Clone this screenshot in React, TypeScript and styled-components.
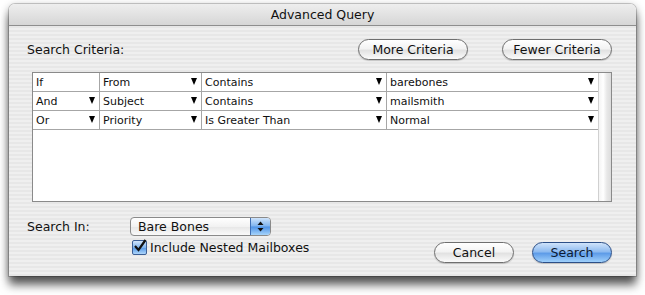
import React from "react";
import styled, { createGlobalStyle } from "styled-components";

const Global = createGlobalStyle`
  html, body { margin: 0; padding: 0; background: #ffffff; }
  body { font-family: "DejaVu Sans", "Liberation Sans", sans-serif; }
`;

const Page = styled.div`
  width: 645px;
  height: 295px;
  padding: 4px 0 0 9px;
  box-sizing: border-box;
`;

const Window = styled.div`
  width: 627px;
  height: 272px;
  border-radius: 6px 6px 0 0;
  background: repeating-linear-gradient(to bottom, #efefef 0, #efefef 2px, #e7e7e7 2px, #e7e7e7 4px);
  box-shadow: 0 9px 10px rgba(0, 0, 0, 0.6), 0 0 0 1px rgba(0, 0, 0, 0.18), 0 2px 8px rgba(0,0,0,0.3);
  display: flex;
  flex-direction: column;
  overflow: hidden;
`;

const TitleBar = styled.div`
  height: 21px;
  border-bottom: 1px solid #8e8e8e;
  background: linear-gradient(to bottom, #eeeeee, #d6d6d6);
  display: flex;
  align-items: center;
  justify-content: center;
  font-size: 12.5px;
  color: #111;
  border-radius: 6px 6px 0 0;
`;

const Content = styled.div`
  flex: 1;
  display: flex;
  flex-direction: column;
  padding: 12px 24px 13px 18px;
`;

const CriteriaRow = styled.div`
  display: flex;
  align-items: center;
  height: 22px;
  gap: 34px;
`;

const Label = styled.div`
  font-size: 12.5px;
  color: #111;
  flex: 1;
`;

const FieldLabel = styled.div`
  font-size: 12.5px;
  color: #111;
  display: flex;
  align-items: center;
`;

const Pill = styled.button<{ $primary?: boolean; $w: number }>`
  width: ${(p) => p.$w}px;
  height: 21px;
  border-radius: 11px;
  font-family: "DejaVu Sans", "Liberation Sans", sans-serif;
  font-size: 12.5px;
  color: ${(p) => (p.$primary ? "#0c1a33" : "#111")};
  padding: 0;
  display: flex;
  align-items: center;
  justify-content: center;
  border: 1px solid ${(p) => (p.$primary ? "#2c4f87" : "#6f6f6f")};
  background: ${(p) =>
    p.$primary
      ? "linear-gradient(to bottom, #cfe3fa 0%, #8ebbf0 45%, #5e9ce8 55%, #9fd0fb 100%)"
      : "linear-gradient(to bottom, #ffffff 0%, #f3f3f3 45%, #e2e2e2 55%, #fbfbfb 100%)"};
  box-shadow: 0 1px 1px rgba(0,0,0,0.18);
`;

const Table = styled.div`
  margin: 12px 0 0 5px;
  width: 580px;
  height: 130px;
  box-sizing: border-box;
  border: 1px solid #8a8a8a;
  background: #fff;
  display: flex;
`;

const Rows = styled.div`
  width: 565px;
  display: flex;
  flex-direction: column;
`;

const Row = styled.div`
  display: grid;
  grid-template-columns: 67px 102px 185px 211px;
  height: 19px;
  border-bottom: 1px solid #a6a6a6;
  box-sizing: border-box;
`;

const Cell = styled.div<{ $last?: boolean }>`
  position: relative;
  display: flex;
  align-items: center;
  padding-left: 3px;
  font-size: 11px;
  color: #111;
  border-right: ${(p) => (p.$last ? "none" : "1px solid #a6a6a6")};
`;

const Arrow = styled.span`
  position: absolute;
  right: 4px;
  top: 5px;
  width: 0;
  height: 0;
  border-left: 3.5px solid transparent;
  border-right: 3.5px solid transparent;
  border-top: 7px solid #000;
`;

const ScrollTrack = styled.div`
  width: 14px;
  border-left: 1px solid #d0d0d0;
  background: linear-gradient(to right, #f4f4f4, #ffffff 35%, #e8e8e8 65%, #dcdcdc);
`;

const Bottom = styled.div`
  flex: 1;
  display: flex;
  align-items: flex-end;
  justify-content: space-between;
  padding-top: 15px;
`;

const Left = styled.div`
  display: grid;
  grid-template-columns: 103px auto;
  row-gap: 4px;
  align-self: flex-start;
`;

const Popup = styled.div`
  width: 141px;
  height: 19px;
  box-sizing: border-box;
  border: 1px solid #8a8a8a;
  border-radius: 4px;
  background: linear-gradient(to bottom, #ffffff, #f2f2f2 50%, #e6e6e6 51%, #fafafa);
  display: flex;
  align-items: center;
  font-size: 12.5px;
  color: #111;
  overflow: hidden;
`;

const PopupText = styled.span`
  flex: 1;
  padding-left: 7px;
`;

const Stepper = styled.div`
  width: 19px;
  height: 100%;
  background: linear-gradient(to bottom, #cfe4fb, #7fb4ef 48%, #4f93e6 52%, #a6d4fb);
  border-left: 1px solid #3f6fb5;
  display: flex;
  align-items: center;
  justify-content: center;
`;

const CheckRow = styled.div`
  grid-column: 2;
  display: flex;
  align-items: center;
  gap: 3px;
  margin-left: 2px;
  font-size: 12.5px;
  color: #111;
`;

const Box = styled.div`
  width: 13px;
  height: 13px;
  border: 1px solid #3c5f95;
  border-radius: 2px;
  background: linear-gradient(to bottom, #d3e6fb, #80b5ef 50%, #5a9be7 55%, #aed6fb);
  position: relative;
`;

const Check = styled.svg`
  position: absolute;
  left: 0;
  top: -2px;
`;

const Buttons = styled.div`
  display: flex;
  gap: 18px;
`;

const rows = [
  ["If", "From", "Contains", "barebones"],
  ["And", "Subject", "Contains", "mailsmith"],
  ["Or", "Priority", "Is Greater Than", "Normal"],
];

export default function App() {
  return (
    <>
      <Global />
      <Page>
        <Window>
          <TitleBar>Advanced Query</TitleBar>
          <Content>
            <CriteriaRow>
              <Label>Search Criteria:</Label>
              <Pill $w={110}>More Criteria</Pill>
              <Pill $w={110}>Fewer Criteria</Pill>
            </CriteriaRow>
            <Table>
              <Rows>
                {rows.map((r, i) => (
                  <Row key={i}>
                    {r.map((c, j) => (
                      <Cell key={j} $last={j === 3}>
                        {c}
                        {!(i === 0 && j === 0) && <Arrow />}
                      </Cell>
                    ))}
                  </Row>
                ))}
              </Rows>
              <ScrollTrack />
            </Table>
            <Bottom>
              <Left>
                <FieldLabel>Search In:</FieldLabel>
                <Popup>
                  <PopupText>Bare Bones</PopupText>
                  <Stepper>
                    <svg width="7" height="11" viewBox="0 0 7 11">
                      <path d="M3.5 0.5 L6.5 4 L0.5 4 Z" fill="#111" />
                      <path d="M3.5 10.5 L6.5 7 L0.5 7 Z" fill="#111" />
                    </svg>
                  </Stepper>
                </Popup>
                <CheckRow>
                  <Box>
                    <Check width="14" height="14" viewBox="0 0 14 14">
                      <path d="M2 7 L5.5 11 L12.5 1" stroke="#111" strokeWidth="2.2" fill="none" />
                    </Check>
                  </Box>
                  Include Nested Mailboxes
                </CheckRow>
              </Left>
              <Buttons>
                <Pill $w={80}>Cancel</Pill>
                <Pill $w={80} $primary>Search</Pill>
              </Buttons>
            </Bottom>
          </Content>
        </Window>
      </Page>
    </>
  );
}
